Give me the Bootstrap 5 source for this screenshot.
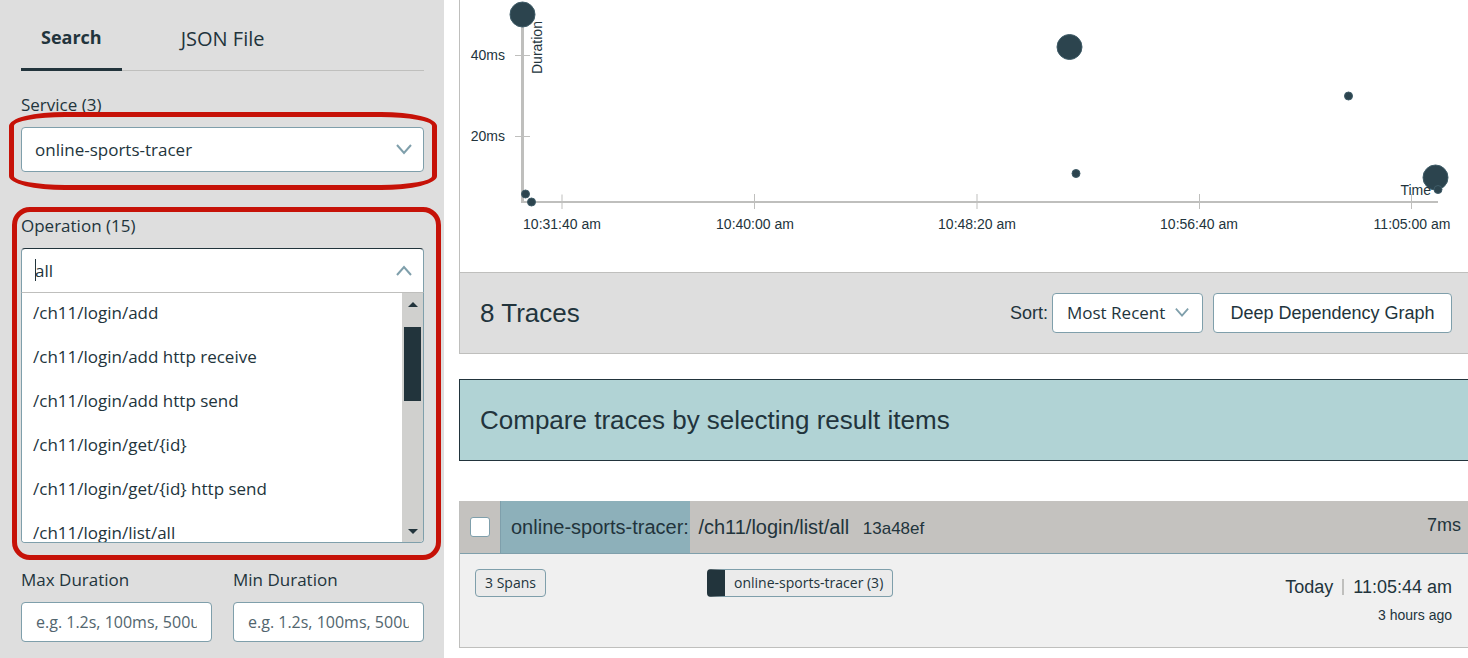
<!DOCTYPE html>
<html lang="en">
<head>
<meta charset="utf-8">
<meta name="viewport" content="width=device-width, initial-scale=1">
<title>Trace search</title>
<link href="https://cdn.jsdelivr.net/npm/bootstrap@5.3.0/dist/css/bootstrap.min.css" rel="stylesheet">
<style>
:root { --ink: #22343c; --edge: #7f9fab; --rule: #bfbfbd; --panel: #dedede; --mark-red: #c61208; --ui: "Open Sans", "Noto Sans", sans-serif; }
body { font-family: "Liberation Sans", Arial, sans-serif; color: var(--ink); background: #fff; overflow-x: hidden; }
.side { flex: 0 0 444px; background: var(--panel); padding: 0 20px 0 21px; font-family: var(--ui); font-size: 17px; }
.side label { display: block; line-height: 24px; margin-bottom: 10px; }
.tabs { height: 71px; border-bottom: 1px solid var(--rule); gap: 39px; margin-bottom: 22px; }
.tabs .nav-link { color: var(--ink); padding: 7px 20px 0; font-size: 20px; line-height: 63px; border-radius: 0; margin-bottom: -1px; }
.tabs .nav-link.active { font-weight: 700; font-size: 18px; border-bottom: 3px solid var(--ink); line-height: 61px; }
.field { border: 1px solid var(--edge); border-radius: 4px; background-color: #fff; color: var(--ink); box-shadow: none; }
.field:focus { border-color: var(--edge); box-shadow: none; }
.side .pick { height: 45px; padding: 0 40px 0 13px; font-size: 17px; background-image: none; }
.chev { position: absolute; right: 12px; top: 15px; width: 16px; height: 16px; pointer-events: none; fill: none; stroke: var(--edge); stroke-width: 2; }
.ring { position: absolute; border: 5px solid var(--mark-red); pointer-events: none; z-index: 3; }
.ring-service { inset: -15px -13px -18px -12px; border-radius: 56px / 14px; }
.ring-operation { inset: -7px -17px -17px -9px; border-radius: 18px; }
.operation { margin-top: 42px; }
.caret { position: absolute; left: 14px; top: 11px; width: 1px; height: 22px; background: var(--ink); }
.side .pick.opened { border-top-color: var(--ink); border-bottom-color: var(--rule); border-radius: 4px 4px 0 0; }
.options { height: 250px; border: 1px solid var(--edge); border-top: 0; border-radius: 0 0 4px 4px; overflow: hidden; background: #fff; }
.options .list-group { padding-top: 8px; }
.options .list-group-item { border: 0; padding: 0 11px; line-height: 24px; margin-bottom: 20px; flex: none; color: var(--ink); background: #fff; }
.rail { width: 21px; background: #d0d0ce; padding: 9px 2px 8px 2px; }
.rail svg { width: 10px; height: 5px; fill: var(--ink); }
.thumb { width: 17px; height: 74px; margin-top: 20px; background: var(--ink); }
.limits { gap: 21px; margin-top: 25px; }
.limits > div { flex: 1 1 0; min-width: 0; }
.duration { height: 40px; padding: 0 14px; font-size: 16px; }
.duration::placeholder { color: #52656e; opacity: 1; }
.results { margin-left: 15px; min-width: 0; }
.plot { border-left: 1px solid var(--rule); }
.plot svg { display: block; width: 100%; }
.plot text { font-size: 14px; fill: var(--ink); }
.summary { background: var(--panel); border: 1px solid var(--rule); border-right: 0; height: 82px; padding: 0 16px 0 20px; }
.headline { font-size: 26px; line-height: 32px; margin: 0; font-weight: 400; }
.sort { font-size: 18px; margin-right: 4px; }
.order-box { margin-right: 10px; }
.order { width: 151px; height: 40px; padding: 0 30px 0 14px; font-family: var(--ui); font-size: 17px; background-image: none; }
.order + .chev { width: 14px; height: 14px; right: 14px; top: 13px; }
.deep { width: 239px; height: 40px; padding: 0; font-size: 18px; }
.compare { background: #b1d3d5; border: 1px solid var(--ink); border-right: 0; height: 82px; padding: 0 20px; margin: 25px 0 40px; }
.trace { border: 1px solid var(--rule); border-right: 0; border-top: 0; background: #f0f0f0; }
.trace-head { height: 53px; background: #c4c2bf; border-bottom: 1px solid var(--edge); }
.trace-head .form-check-input { width: 20px; height: 20px; margin: 0 10px; border-color: var(--edge); border-radius: 3px; flex: none; }
.span-bar { height: 52px; width: 190px; background: #8db0ba; border-left: 1px solid var(--edge); padding-left: 10px; font-size: 20px; line-height: 52px; white-space: nowrap; }
.trace-head a { color: var(--ink); text-decoration: none; }
.trace-path { margin-left: 4px; }
.trace-id { font-size: 17px; margin-left: 8px; }
.took { font-size: 18px; line-height: 48px; margin-right: 7px; }
.trace-body { height: 93px; padding: 15px 16px 0 15px; }
.spans { flex: 0 0 232px; }
.chip { height: 28px; border: 1px solid var(--edge); border-radius: 4px; font: 14px/26px var(--ui); padding: 0 9px; background: #ebebeb; }
.chip-service { border-left: 18px solid var(--ink); }
.when { font-size: 18px; line-height: 24px; margin-top: 6px; }
.bar { width: 2px; height: 16px; background: var(--rule); margin: 0 9px; }
.ago { font-size: 14px; line-height: 20px; margin-top: 6px; }
</style>
</head>
<body>
<div class="d-flex min-vh-100">
  <aside class="side">
    <nav class="nav tabs flex-nowrap">
      <a class="nav-link active" href="#search">Search</a>
      <a class="nav-link" href="#json">JSON File</a>
    </nav>
    <form>
      <label for="service">Service (3)</label>
      <div class="position-relative">
        <select id="service" class="form-select field pick"><option>online-sports-tracer</option></select>
        <svg class="chev" viewBox="0 0 16 16"><path d="M1 3l7 8 7-8"/></svg>
        <span class="ring ring-service"></span>
      </div>
      <div class="position-relative operation">
        <label for="operation">Operation (15)</label>
        <div class="position-relative">
          <input id="operation" class="form-control field pick opened" value="all" role="combobox" aria-expanded="true" aria-controls="operations">
          <span class="caret"></span>
          <svg class="chev" viewBox="0 0 16 16"><path d="M1 12l7-8 7 8"/></svg>
        </div>
        <div class="options d-flex">
          <div id="operations" class="list-group list-group-flush flex-grow-1" role="listbox">
            <button type="button" role="option" class="list-group-item text-start">/ch11/login/add</button>
            <button type="button" role="option" class="list-group-item text-start">/ch11/login/add http receive</button>
            <button type="button" role="option" class="list-group-item text-start">/ch11/login/add http send</button>
            <button type="button" role="option" class="list-group-item text-start">/ch11/login/get/{id}</button>
            <button type="button" role="option" class="list-group-item text-start">/ch11/login/get/{id} http send</button>
            <button type="button" role="option" class="list-group-item text-start">/ch11/login/list/all</button>
          </div>
          <div class="rail d-flex flex-column">
            <svg class="ms-1" viewBox="0 0 10 5"><path d="M0 5l5-5 5 5z"/></svg>
            <div class="thumb"></div>
            <svg class="mt-auto ms-1" viewBox="0 0 10 5"><path d="M0 0l5 5 5-5z"/></svg>
          </div>
        </div>
        <span class="ring ring-operation"></span>
      </div>
      <div class="d-flex limits">
        <div><label for="max">Max Duration</label><input id="max" class="form-control field duration" placeholder="e.g. 1.2s, 100ms, 500us"></div>
        <div><label for="min">Min Duration</label><input id="min" class="form-control field duration" placeholder="e.g. 1.2s, 100ms, 500us"></div>
      </div>
    </form>
  </aside>
  <main class="results flex-grow-1">
    <div class="plot">
      <svg viewBox="0 0 1008 272" role="img" aria-label="Trace duration over time">
        <g fill="none" stroke="#bfbfbd">
          <path stroke-width="3" d="M62.5 14V203"/>
          <path stroke-width="2" d="M61 202H978"/>
          <path d="M55 55.5H70M55 136.5H70M102 194.5V209M294.5 194V209M517 194V209M739.5 194V209M951.5 194V209"/>
        </g>
        <g fill="#2c444e" stroke="#3f5c68">
          <circle cx="62.5" cy="14.5" r="12.5"/><circle cx="609.5" cy="47" r="12.5"/><circle cx="975.5" cy="177.5" r="12.5"/>
          <circle cx="65.5" cy="194" r="4"/><circle cx="71.5" cy="202" r="4"/><circle cx="616" cy="173.5" r="4"/><circle cx="888.5" cy="96" r="4"/><circle cx="978" cy="189.5" r="4"/>
        </g>
        <g text-anchor="end"><text x="45" y="60">40ms</text><text x="45" y="141">20ms</text><text x="971" y="195">Time</text></g>
        <text transform="translate(82 74) rotate(-90)">Duration</text>
        <g text-anchor="middle"><text x="102" y="229">10:31:40 am</text><text x="295" y="229">10:40:00 am</text><text x="517" y="229">10:48:20 am</text><text x="739" y="229">10:56:40 am</text><text x="952" y="229">11:05:00 am</text></g>
      </svg>
    </div>
    <div class="summary d-flex align-items-center">
      <h1 class="headline me-auto">8 Traces</h1>
      <label class="sort" for="order">Sort:</label>
      <div class="position-relative order-box">
        <select id="order" class="form-select field order"><option>Most Recent</option></select>
        <svg class="chev" viewBox="0 0 16 16"><path d="M1 3l7 8 7-8"/></svg>
      </div>
      <button type="button" class="btn field deep">Deep Dependency Graph</button>
    </div>
    <div class="compare d-flex align-items-center"><h2 class="headline">Compare traces by selecting result items</h2></div>
    <article class="trace">
      <div class="trace-head d-flex align-items-center">
        <input class="form-check-input" type="checkbox" aria-label="Select trace for comparison">
        <div class="span-bar me-auto"><a href="#trace">online-sports-tracer: <span class="trace-path">/ch11/login/list/all</span> <span class="trace-id">13a48ef</span></a></div>
        <span class="took align-self-start">7ms</span>
      </div>
      <div class="trace-body row g-0 align-items-start">
        <div class="spans"><span class="chip d-inline-block">3 Spans</span></div>
        <div class="col"><span class="chip chip-service d-inline-block">online-sports-tracer (3)</span></div>
        <div class="col-auto text-end">
          <div class="when d-flex align-items-center">Today<span class="bar"></span>11:05:44 am</div>
          <div class="ago">3 hours ago</div>
        </div>
      </div>
    </article>
  </main>
</div>
<script src="https://cdn.jsdelivr.net/npm/bootstrap@5.3.0/dist/js/bootstrap.bundle.min.js"></script>
</body>
</html>
